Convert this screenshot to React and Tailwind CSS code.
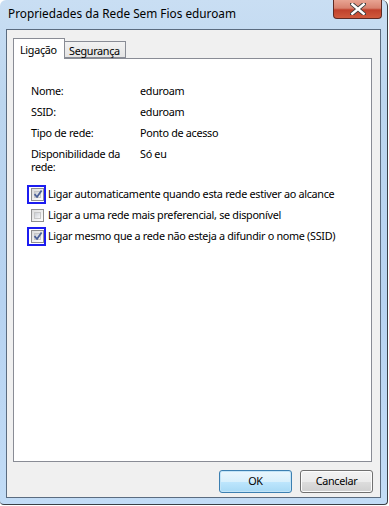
import React from "react";

const Check = ({ checked, focus }) => (
  <div className="relative w-[13px] h-[13px] shrink-0">
    <div className="w-[13px] h-[13px] border border-[#8f8f8f] bg-[linear-gradient(135deg,#dcdcdc,#ffffff)] p-[2px]">
      <div className="w-full h-full border border-[#c6c6c6] bg-[linear-gradient(135deg,#cbcfd5,#f6f6f6)]" />
    </div>
    {checked && (
      <svg className="absolute left-[2px] top-[1px]" width="10" height="10" viewBox="0 0 10 10">
        <path d="M1.5 5.2 L4 8 L8.6 1.4" fill="none" stroke="#4a5f97" strokeWidth="1.8" strokeLinejoin="round" />
      </svg>
    )}
    {focus && <div className="absolute -left-[4px] -top-[3px] w-[19px] h-[19px] border-2 border-[#1c1cf0]" />}
  </div>
);

const rows = [
  ["Nome:", "eduroam"],
  ["SSID:", "eduroam"],
  ["Tipo de rede:", "Ponto de acesso"],
  ["Disponibilidade da rede:", "Só eu"],
];

const options = [
  { label: "Ligar automaticamente quando esta rede estiver ao alcance", checked: true, focus: true },
  { label: "Ligar a uma rede mais preferencial, se disponível", checked: false, focus: false },
  { label: "Ligar mesmo que a rede não esteja a difundir o nome (SSID)", checked: true, focus: true },
];

export default function App() {
  return (
    <div className="w-[389px] h-[506px] overflow-hidden bg-white font-['Noto_Sans',sans-serif] text-[10.8px] tracking-[-0.3px] text-black">
      <div className="relative w-[388px] h-[505px] flex flex-col rounded-t-[6px] rounded-b-[4px] border-r border-b border-[#3a3f45] bg-[linear-gradient(180deg,#c9def3_0%,#bcd6ef_20%,#b7d3f1_60%,#c2dcf6_100%)]">
        <div className="h-[29px] shrink-0 flex items-center pl-[8px] pb-[1px] text-[11.8px] tracking-normal whitespace-nowrap">
          Propriedades da Rede Sem Fios eduroam
        </div>
        <div className="absolute left-[333px] top-0 w-[49px] h-[19px] rounded-b-[4px] border border-t-0 border-[#5e2a24] bg-[linear-gradient(180deg,#e8a493_0%,#d8826f_45%,#c0412c_55%,#d05a3d_100%)] flex items-center justify-center">
          <svg width="16" height="12" viewBox="0 0 16 12">
            <path d="M2 1 L14 11 M14 1 L2 11" stroke="#3b3b3b" strokeWidth="4.2" strokeLinecap="square" />
            <path d="M2.3 1.3 L13.7 10.7 M13.7 1.3 L2.3 10.7" stroke="#ffffff" strokeWidth="2.4" strokeLinecap="square" />
          </svg>
        </div>
        <div className="ml-[6px] w-[375px] h-[469px] border border-[#5b6c80] bg-[#f0f0f0] flex flex-col pt-[8px] pl-[6px]">
          <div className="flex items-end h-[20px] relative z-10">
            <div className="w-[52px] h-[21px] -mb-[1px] border border-b-0 border-[#898c95] bg-white pl-[6px] pt-[3px]">
              Ligação
            </div>
            <div className="w-[61px] h-[17px] border border-l-0 border-[#898c95] bg-[linear-gradient(180deg,#f2f2f2,#e4e4e4)] pl-[4px] leading-[17px] whitespace-nowrap">
              Segurança
            </div>
          </div>
          <div className="w-[359px] h-[404px] border border-[#898c95] bg-white pl-[17px] pt-[25px]">
            <div className="grid grid-cols-[109px_1fr] gap-y-[8px] leading-[13px]">
              {rows.map(([k, v]) => (
                <React.Fragment key={k}>
                  <div className="w-[92px]">{k}</div>
                  <div>{v}</div>
                </React.Fragment>
              ))}
            </div>
            <div className="mt-[14px] flex flex-col gap-[6px]">
              {options.map((o) => (
                <div key={o.label} className="flex items-center gap-[4px] h-[15px] whitespace-nowrap">
                  <Check checked={o.checked} focus={o.focus} />
                  <span>{o.label}</span>
                </div>
              ))}
            </div>
          </div>
          <div className="flex justify-end gap-[8px] pr-[7px] mt-[8px]">
            <button className="w-[73px] h-[23px] rounded-[3px] border border-[#3c7fb1] bg-[linear-gradient(180deg,#eaf6fd_0%,#d9f0fc_50%,#bee6fd_51%,#a7d9f5_100%)] shadow-[inset_0_0_0_1px_#c3e4f7]">
              OK
            </button>
            <button className="w-[73px] h-[23px] rounded-[3px] border border-[#707070] bg-[linear-gradient(180deg,#f2f2f2_0%,#ebebeb_50%,#dddddd_51%,#cfcfcf_100%)] shadow-[inset_0_0_0_1px_#fcfcfc]">
              Cancelar
            </button>
          </div>
        </div>
      </div>
    </div>
  );
}
